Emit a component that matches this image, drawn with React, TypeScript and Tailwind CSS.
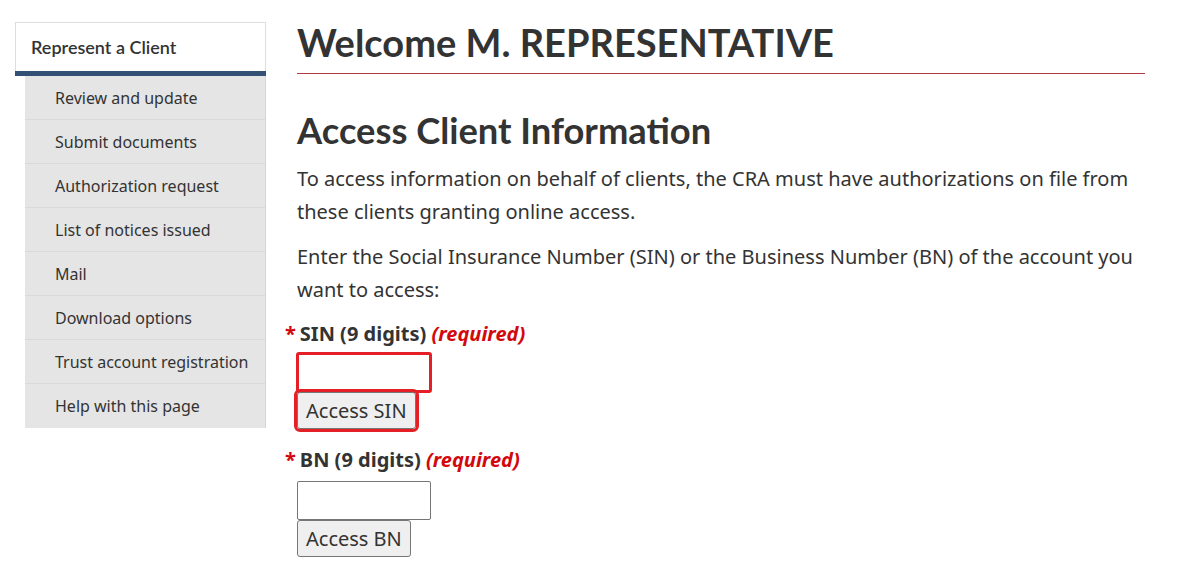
const menu = [
  "Review and update",
  "Submit documents",
  "Authorization request",
  "List of notices issued",
  "Mail",
  "Download options",
  "Trust account registration",
  "Help with this page",
];

const lato = "font-['Lato',sans-serif]";
const noto = "font-['Noto_Sans',sans-serif]";

const Sidebar = () => {
  return (
    <nav className="w-[251px] shrink-0 pt-[22px]">
      <div
        className={`${lato} h-[49px] flex items-center pl-[15px] bg-white border-x border-t border-[#dddddd] text-[18px] font-semibold text-[#333333]`}
      >
        Represent a Client
      </div>
      <div className="h-[5px] bg-[#335075]" />
      <ul className={`${noto} ml-[10px] bg-[#e5e5e5] border-r border-[#d6d6d6]`}>
        {menu.map((item, i) => (
          <li
            key={item}
            className={`h-[44px] flex items-center pl-[30px] text-[16px] text-[#333333] ${
              i < menu.length - 1 ? "border-b border-[#dadada]" : ""
            }`}
          >
            {item}
          </li>
        ))}
      </ul>
    </nav>
  );
};

const Field = ({
  label,
  button,
  error,
}: {
  label: string;
  button: string;
  error?: boolean;
}) => {
  return (
    <div>
      <label
        className={`${noto} block text-[20px] leading-[33px] font-bold text-[#333333] ${
          error ? "mb-[3px]" : "mb-[5px]"
        }`}
      >
        <span className="-ml-[12px] mr-[4px] text-[#d3080c]">*</span>
        {label}{" "}
        <em className="text-[#d3080c]">(required)</em>
      </label>
      <input
        type="text"
        className={`block w-[134px] h-[39px] bg-white border border-[#767676] rounded-[2px] ${
          error ? "outline-[3px] outline-solid outline-[#e41f26] -outline-offset-2" : ""
        }`}
      />
      <button
        className={`${noto} h-[37px] px-[8px] pt-[2px] text-[20px] text-[#333333] bg-[#efefef] border border-[#767676] rounded-[3px] ${
          error ? "outline-[3px] outline-solid outline-[#e41f26] outline-offset-0 relative" : ""
        }`}
      >
        {button}
      </button>
    </div>
  );
};

export default function App() {
  return (
    <div className="min-h-screen bg-white flex pl-[15px]">
      <Sidebar />

      <main className="ml-[31px] w-[848px]">
        {/* Welcome */}
        <h1
          className={`${lato} mt-[22px] pb-[9px] border-b border-[#af3c43] text-[38px] leading-[1.1] font-bold text-[#333333]`}
        >
          Welcome M. REPRESENTATIVE
        </h1>

        <h2 className={`${lato} mt-[37px] mb-[11px] text-[36.3px] leading-[1.1] font-bold text-[#333333]`}>
          Access Client Information
        </h2>

        <div className={`${noto} text-[20px] leading-[33px] text-[#333333]`}>
          <p className="mb-[12px]">
            To access information on behalf of clients, the CRA must have authorizations on file from
            these clients granting online access.
          </p>
          <p className="mb-[11px]">
            Enter the Social Insurance Number (SIN) or the Business Number (BN) of the account you
            want to access:
          </p>
        </div>

        <Field label="SIN (9 digits)" button="Access SIN" error />
        <div className="mt-[14px]">
          <Field label="BN (9 digits)" button="Access BN" />
        </div>
      </main>
    </div>
  );
}
